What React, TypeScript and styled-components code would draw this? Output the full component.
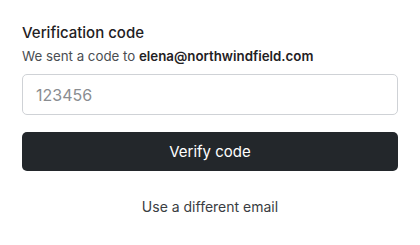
import React from "react";
import styled, { createGlobalStyle } from "styled-components";

const Global = createGlobalStyle`
  html, body { margin: 0; padding: 0; background: #ffffff; }
  body { font-family: Inter, "Noto Sans", sans-serif; -webkit-font-smoothing: antialiased; }
  * { box-sizing: border-box; }
`;

const Card = styled.div`
  width: 420px;
  height: 245px;
  padding: 24px 22px 0 22px;
  display: flex;
  flex-direction: column;
`;

const Title = styled.h2`
  margin: 0;
  font-size: 15px;
  font-weight: 500;
  line-height: 18px;
  color: #1f2124;
`;

const Subtitle = styled.p`
  margin: 6px 0 0 0;
  font-size: 13.3px;
  line-height: 16px;
  color: #4a4d52;
  strong { font-weight: 600; color: #1f2124; }
`;

const Input = styled.input`
  margin-top: 10px;
  height: 41px;
  width: 100%;
  border: 1px solid #cfd2d6;
  border-radius: 5px;
  padding: 0 13px;
  font-family: inherit;
  font-size: 16px;
  color: #1f2124;
  outline: none;
  &::placeholder { color: #8a8d91; }
`;

const Button = styled.button`
  margin-top: 17px;
  height: 39px;
  width: 100%;
  border: none;
  border-radius: 5px;
  background: #23272b;
  color: #ffffff;
  font-family: inherit;
  font-size: 15px;
  font-weight: 400;
  cursor: pointer;
`;

const LinkButton = styled.button`
  margin-top: 27px;
  align-self: center;
  background: none;
  border: none;
  padding: 0;
  font-family: inherit;
  font-size: 14px;
  color: #3a3d42;
  cursor: pointer;
`;

export default function App() {
  return (
    <>
      <Global />
      <Card>
        <Title>Verification code</Title>
        <Subtitle>
          We sent a code to <strong>elena@northwindfield.com</strong>
        </Subtitle>
        <Input placeholder="123456" />
        <Button>Verify code</Button>
        <LinkButton>Use a different email</LinkButton>
      </Card>
    </>
  );
}
